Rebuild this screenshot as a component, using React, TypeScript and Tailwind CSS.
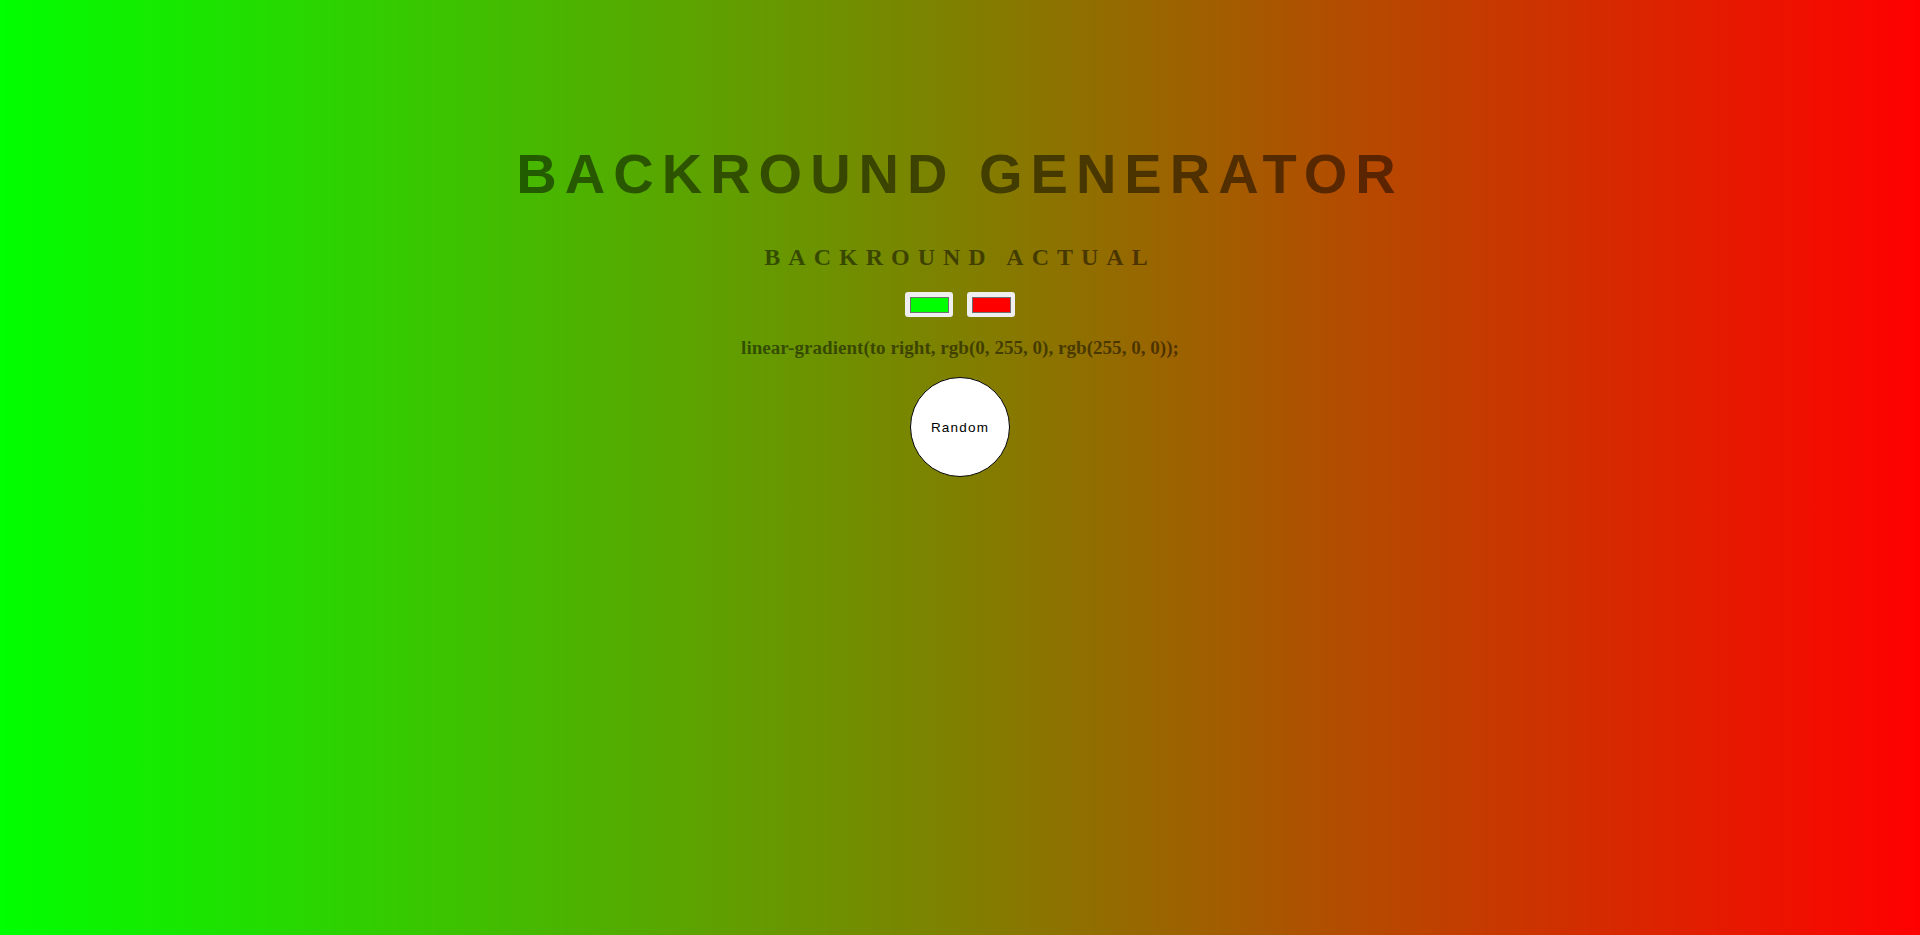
import React, { useState } from 'react'

const Swatch = ({ color }: { color: string }) => {
    return (
        <div className="flex h-[25px] w-[48px] items-center justify-center rounded-[3px] bg-[#efefef]">
            <div className="h-[16px] w-[39px] border border-[#6f6f6f]" style={{ backgroundColor: color }} />
        </div>
    )
}

const App = () => {
    const [left] = useState('#00ff00')
    const [right] = useState('#ff0000')

    return (
        <div className="flex min-h-screen w-full flex-col items-center bg-[linear-gradient(to_right,rgb(0,255,0),rgb(255,0,0))] pt-[142px] text-center text-black/50">
            {/* Title */}
            <h1 className="font-['Liberation_Sans',Arial,sans-serif] text-[56px] font-bold leading-[64px] tracking-[8px]">
                BACKROUND GENERATOR
            </h1>

            <h2 className="mt-[37px] font-['Liberation_Serif','Times_New_Roman',serif] text-[24px] font-bold leading-[28px] tracking-[8px]">
                BACKROUND ACTUAL
            </h2>

            {/* Color pickers */}
            <div className="mt-[21px] flex gap-[14px]">
                <Swatch color={left} />
                <Swatch color={right} />
            </div>

            <h3 className="mt-[20px] font-['Liberation_Serif','Times_New_Roman',serif] text-[19.1px] font-bold leading-[22px]">
                linear-gradient(to right, rgb(0, 255, 0), rgb(255, 0, 0));
            </h3>

            <button className="mt-[18px] flex h-[100px] w-[100px] items-center justify-center rounded-full border border-black bg-white pt-[2px] font-['Liberation_Sans',Arial,sans-serif] text-[13.5px] font-medium tracking-[1.2px] text-black">
                Random
            </button>
        </div>
    )
}

export default App
